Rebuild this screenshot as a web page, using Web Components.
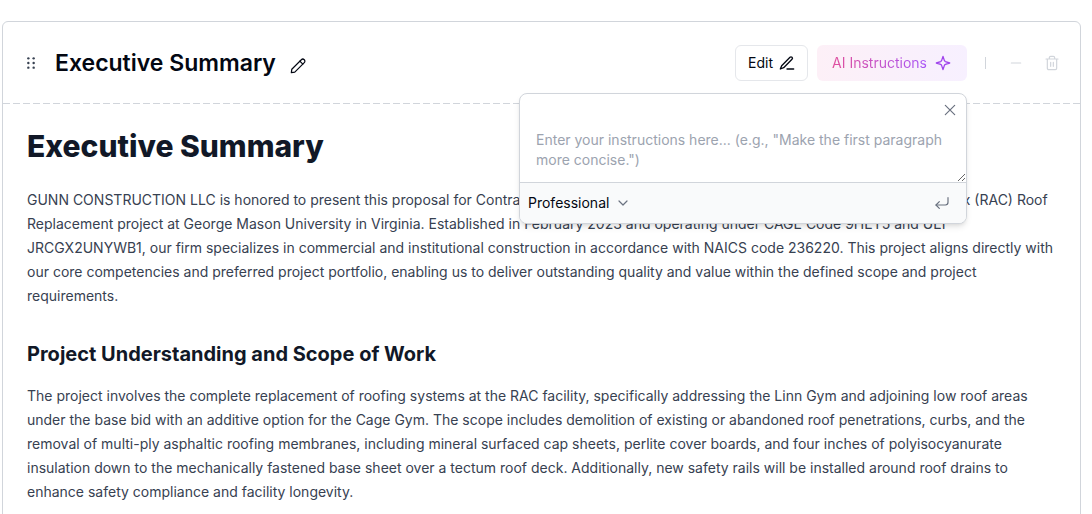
<!DOCTYPE html>
<html lang="en">
<head>
<meta charset="utf-8">
<meta name="viewport" content="width=device-width, initial-scale=1">
<title>Executive Summary</title>
<style>
  body {
    margin: 0;
    padding: 21px 11px 0 2px;
    background: #fff;
    color: #030712;
    font-family: Inter, sans-serif;
    font-size: 14px;
    line-height: 20px;
  }
</style>
</head>
<body>
<section-card>
  <section-header slot="header" heading="Executive Summary"></section-header>
  <proposal-text>
    <h1>Executive Summary</h1>
    <p>GUNN CONSTRUCTION LLC is honored to present this proposal for Contract Number 2 for the George Mason Recreation and Athletic Complex (RAC) Roof Replacement project at George Mason University in Virginia. Established in February 2023 and operating under CAGE Code 9HET5 and UEI JRCGX2UNYWB1, our firm specializes in commercial and institutional construction in accordance with NAICS code 236220. This project aligns directly with our core competencies and preferred project portfolio, enabling us to deliver outstanding quality and value within the defined scope and project requirements.</p>
    <h2>Project Understanding and Scope of Work</h2>
    <p>The project involves the complete replacement of roofing systems at the RAC facility, specifically addressing the Linn Gym and adjoining low roof areas under the base bid with an additive option for the Cage Gym. The scope includes demolition of existing or abandoned roof penetrations, curbs, and the removal of multi-ply asphaltic roofing membranes, including mineral surfaced cap sheets, perlite cover boards, and four inches of polyisocyanurate insulation down to the mechanically fastened base sheet over a tectum roof deck. Additionally, new safety rails will be installed around roof drains to enhance safety compliance and facility longevity.</p>
  </proposal-text>
</section-card>

<script>
const ICONS = {
  grip: '<g fill="currentColor" stroke="none"><circle cx="8" cy="5" r="1.800"/><circle cx="16" cy="5" r="1.800"/><circle cx="8" cy="12" r="1.800"/><circle cx="16" cy="12" r="1.800"/><circle cx="8" cy="19" r="1.800"/><circle cx="16" cy="19" r="1.800"/></g>',
  pencil: '<path d="M2 22l.7-5.200L17 2.600a3 3 0 0 1 4.400 4.400L7.200 21.300z"/><path d="M14.800 4.800l4.400 4.400"/>',
  penLine: '<path d="M12 21h10"/><path d="M16.500 3.500a2.120 2.120 0 0 1 3 3L7 19l-5 2 2-5z"/>',
  sparkle: '<path d="M12 2l2.100 6.400a2.500 2.500 0 0 0 1.500 1.500L22 12l-6.400 2.100a2.500 2.500 0 0 0-1.500 1.500L12 22l-2.100-6.400a2.500 2.500 0 0 0-1.500-1.500L2 12l6.400-2.100a2.500 2.500 0 0 0 1.500-1.500z"/>',
  minus: '<path d="M5 12h14"/>',
  trash: '<path d="M3 6h18M19 6v14a2 2 0 0 1-2 2H7a2 2 0 0 1-2-2V6M8 6V4a2 2 0 0 1 2-2h4a2 2 0 0 1 2 2v2M10 11v6M14 11v6"/>',
  close: '<path d="M19 5L5 19M5 5l14 14"/>',
  chevron: '<path d="M6 9l6 6 6-6"/>',
  enter: '<path d="M8 10l-5 5 5 5"/><path d="M21 4v7a4 4 0 0 1-4 4H3"/>'
};

function define(name, html, setup) {
  customElements.define(name, class extends HTMLElement {
    connectedCallback() {
      if (this.shadowRoot) return;
      this.attachShadow({ mode: 'open' }).innerHTML = html;
      if (setup) setup(this, this.shadowRoot);
    }
  });
}

define('ui-icon', `
  <style>
    :host { display: block; width: 16px; height: 16px; flex: none; }
    svg { display: block; width: 100%; height: 100%; fill: none; stroke: currentColor; stroke-width: var(--stroke, 2); stroke-linecap: round; stroke-linejoin: round; }
  </style>
  <svg viewBox="0 0 24 24" aria-hidden="true"></svg>`,
  (host, root) => { root.querySelector('svg').innerHTML = ICONS[host.getAttribute('name')]; });

define('icon-button', `
  <style>
    :host { display: block; }
    button { display: block; margin: 0; padding: 0; border: 0; background: none; color: inherit; cursor: pointer; }
  </style>
  <button type="button"><slot></slot></button>`,
  (host, root) => root.querySelector('button').setAttribute('aria-label', host.getAttribute('label')));

define('outline-button', `
  <style>
    :host { display: block; }
    button { display: flex; align-items: center; gap: 6px; height: 36px; padding: 0 12px; border: 1px solid #e5e7eb; border-radius: 6px; background: #fff; color: #030712; font: 400 14px/20px Inter, sans-serif; cursor: pointer; }
  </style>
  <button type="button"><slot></slot></button>`);

define('ai-button', `
  <style>
    :host { display: block; }
    button { display: flex; align-items: center; gap: 8px; height: 36px; padding: 0 16px 0 15px; border: 0; border-radius: 6px; background: linear-gradient(90deg, #fdf0f7, #f7f0ff); color: #a044ec; font: 400 14px/20px Inter, sans-serif; cursor: pointer; }
    span { background: linear-gradient(90deg, #e04f9d, #a855f7); background-clip: text; color: transparent; }
  </style>
  <button type="button"><span><slot></slot></span><ui-icon name="sparkle"></ui-icon></button>`);

define('tone-select', `
  <style>
    :host { display: flex; align-items: center; gap: 6px; color: #6b7280; }
    select { appearance: none; field-sizing: content; margin: 0; padding: 0; border: 0; background: none; color: #030712; font: 400 14px/20px Inter, sans-serif; }
  </style>
  <select aria-label="Tone"><option>Professional</option></select>
  <ui-icon name="chevron"></ui-icon>`);

define('instruction-popover', `
  <style>
    :host { display: block; box-sizing: border-box; border: 1px solid #d1d5db; border-radius: 8px; background: #fff; box-shadow: 0 4px 6px -1px #0000001a, 0 2px 4px -2px #0000001a; overflow: hidden; --stroke: 1.800; }
    icon-button { color: #6b7280; }
    .close { position: absolute; top: 8px; right: 8px; }
    textarea { display: block; box-sizing: border-box; width: 100%; height: 88px; margin: 0; padding: 36px 16px 12px; border: 0; outline: 0; resize: vertical; overflow: hidden; background: transparent; color: #030712; font: 400 14px/20px Inter, sans-serif; }
    textarea::placeholder { color: #9ca3af; }
    footer { display: flex; align-items: center; justify-content: space-between; height: 40px; padding: 0 16px 0 8px; border-top: 1px solid #d1d5db; background: #f9fafb; }
  </style>
  <textarea aria-label="Instructions" placeholder='Enter your instructions here... (e.g., "Make the first paragraph more concise.")'></textarea>
  <icon-button class="close" label="Close"><ui-icon name="close"></ui-icon></icon-button>
  <footer><tone-select></tone-select><icon-button label="Submit"><ui-icon name="enter"></ui-icon></icon-button></footer>`);

define('section-header', `
  <style>
    :host { display: flex; align-items: center; justify-content: space-between; padding: 23px 20px 22px; }
    div { display: flex; align-items: center; }
    h2 { margin: 0 14px 0 16px; font-size: 23px; line-height: 32px; font-weight: 600; }
    .grip { color: #374151; }
    .rename { padding-top: 6px; --stroke: 1.800; }
    .tools { gap: 9px; }
    .anchor { display: block; position: relative; }
    instruction-popover { position: absolute; z-index: 1; top: 48px; right: 0; width: 448px; }
    .extra { gap: 20px; margin-left: 9px; color: #d1d5db; --stroke: 1.800; }
    i { width: 1px; height: 12px; margin-right: 2px; background: #d1d5db; }
  </style>
  <div>
    <icon-button class="grip" label="Move section"><ui-icon name="grip"></ui-icon></icon-button>
    <h2></h2>
    <icon-button class="rename" label="Rename section"><ui-icon name="pencil"></ui-icon></icon-button>
  </div>
  <div class="tools">
    <outline-button>Edit<ui-icon name="penLine"></ui-icon></outline-button>
    <div class="anchor"><ai-button>AI Instructions</ai-button><instruction-popover></instruction-popover></div>
    <div class="extra">
      <i></i>
      <icon-button label="Collapse section"><ui-icon name="minus"></ui-icon></icon-button>
      <icon-button label="Delete section"><ui-icon name="trash"></ui-icon></icon-button>
    </div>
  </div>`,
  (host, root) => { root.querySelector('h2').textContent = host.getAttribute('heading'); });

define('proposal-text', `
  <style>
    :host { display: block; padding: 24px; }
    ::slotted(h1) { margin: 0 0 24px; color: #111827; font-size: 30px; line-height: 36px; font-weight: 800; }
    ::slotted(h2) { margin: 32px 0 16px; color: #111827; font-size: 20px; line-height: 28px; font-weight: 700; }
    ::slotted(p) { margin: 0; color: #374151; font-size: 14px; line-height: 24px; }
  </style>
  <slot></slot>`);

define('section-card', `
  <style>
    :host { display: block; border: 1px solid #d1d5db; border-radius: 6px; background: #fff; }
    hr { height: 1px; margin: 0; border: 0; background: repeating-linear-gradient(90deg, #d1d5db 0 7px, transparent 7px 10px); }
  </style>
  <slot name="header"></slot>
  <hr>
  <slot></slot>`);
</script>
</body>
</html>
